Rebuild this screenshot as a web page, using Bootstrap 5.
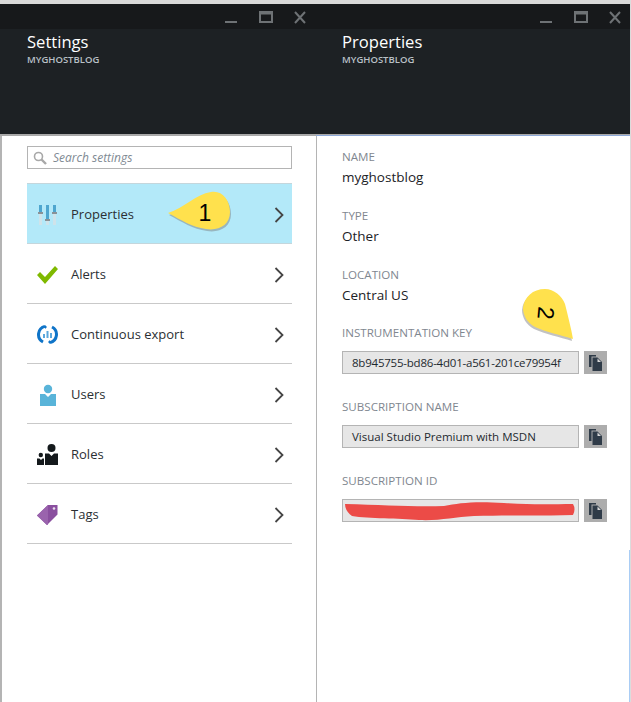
<!DOCTYPE html>
<html lang="en"><head><meta charset="utf-8">
<title>Settings</title>
<link href="https://cdn.jsdelivr.net/npm/bootstrap@5.3.0/dist/css/bootstrap.min.css" rel="stylesheet">
<style>
html,body{margin:0;height:702px;overflow:hidden;background:#fff}
body{font-family:"Open Sans","Noto Sans","Liberation Sans",sans-serif;padding-top:4px;position:relative}
.topline{position:absolute;left:0;right:0;top:0;height:4px;background:#d9d9d9}
.blades{height:698px;width:631px}
.blade{width:316px;height:100%;flex:none}
.blade+.blade{width:315px}
.blade-head{height:130px;background:#1d2124;border-bottom:2px solid #a9a9a9;box-sizing:content-box}
.win-bar{height:25px;background:#17191b;padding-right:6px}
.win-bar svg{display:block}
.blade-title{margin:0;padding:1px 0 0 27px;font-size:16.6px;line-height:24px;color:#fff;font-weight:400}
.blade+.blade .blade-title,.blade+.blade .blade-sub{padding-left:26px}
.blade-sub{padding-left:27px;font-size:9.5px;line-height:12px;font-weight:600;color:#b9c0c6}
.blade-body{height:566px;border-left:2px solid #b4b4b4;background:#fff}
.blade+.blade .blade-body{border-left-width:1px;border-left-color:#b4b4b4}
.left-in{padding:10px 24px 0 25px}
.search-box{height:23px;border:1px solid #b4b4b4;padding-left:5px;gap:6px;font-size:12px;font-style:italic;color:#7f8a93;background:#fff}
.menu-list{margin-top:14px;--bs-list-group-bg:transparent;border-radius:0}
.menu-row{height:60px;border:0;border-bottom:1px solid #c9c9c9;border-radius:0!important;padding:2px 8px 0 10px;font-size:13px;color:#2b2f33;background:transparent}
.menu-row.on{background:#b3e9f9;border-bottom-color:#c4d6dc;border-top:1px solid #c4d6dc;height:61px}
.ico{width:21px;flex:none;margin-right:13px}
.ico svg{display:block}
.props{padding:13px 0 0 25px}
.p-label{font-size:11.6px;line-height:16px;color:#7f8790;margin:0}
.p-value{font-size:13.5px;line-height:20px;color:#1c2226;margin:2px 0 21px}
.p-value.last{margin-bottom:20px}
.field-row{margin:10px 0 25px;gap:5px;height:23px}
.field-box{width:237px;height:23px;border:1px solid #b4b4b4;background:#e6e6e6;font-size:11.5px;line-height:21px;padding-left:9px;color:#1f2a30;white-space:nowrap;overflow:hidden;position:relative}
.key-text{letter-spacing:-.22px}
.copy-btn{width:23px;height:23px;background:#adadad;flex:none}
.scribble{position:absolute;left:1px;top:1px}
.callout{position:absolute;display:block;overflow:visible}
.callout text{font-family:"Liberation Sans",sans-serif;font-size:23px;fill:#000;text-anchor:middle}
.edge-r{position:absolute;left:630px;top:0;width:1px;height:702px;background:#dcdcdc}
.edge-b{position:absolute;left:629px;top:550px;width:1px;height:152px;background:#a9cdf5}
.edge-t{position:absolute;left:316px;top:135px;width:314px;height:1px;background:#8ea9d8}
</style></head><body>
<div class="topline"></div>
<div class="blades d-flex">
 <section class="blade">
  <div class="blade-head">
   <div class="win-bar d-flex justify-content-end align-items-center"><svg width="90" height="25" viewBox="0 0 90 25"><rect x="5" y="17" width="12" height="2" fill="#6e7275"/><rect x="40" y="8" width="12" height="10" fill="none" stroke="#6e7275" stroke-width="2"/><rect x="39" y="7" width="14" height="3.500" fill="#6e7275"/><path d="M75 8l10 11M85 8L75 19" stroke="#6e7275" stroke-width="2" fill="none"/></svg></div>
   <h1 class="blade-title">Settings</h1>
   <div class="blade-sub">MYGHOSTBLOG</div>
  </div>
  <div class="blade-body left-in">
   <div class="search-box d-flex align-items-center">
    <svg width="14" height="14" viewBox="0 0 14 14"><circle cx="5.5" cy="5.5" r="4" fill="none" stroke="#a8a8a8" stroke-width="1.6"/><path d="M8.5 8.500l4.500 4.500" stroke="#a8a8a8" stroke-width="2.400"/></svg>
    <span>Search settings</span>
   </div>
   <div class="list-group menu-list">
    <div class="list-group-item menu-row on d-flex align-items-center">
     <span class="ico"><svg width="21" height="22" viewBox="0 0 21 22"><g fill="#cfe3ea"><rect x="2" y="1" width="3" height="20"/><rect x="9" y="1" width="3" height="20"/><rect x="16" y="1" width="3" height="20"/></g><g fill="#4ea6cf"><rect x="2" y="1" width="3" height="7"/><rect x="9" y="1" width="3" height="14"/><rect x="16" y="1" width="3" height="7"/></g><g fill="#8a9297"><rect x="1" y="8" width="5" height="2"/><rect x="8" y="15" width="5" height="2"/><rect x="15" y="8" width="5" height="2"/></g></svg></span>
     <span class="flex-grow-1">Properties</span>
     <svg width="10" height="16" viewBox="0 0 10 16"><path d="M1.500 1l7 7-7 7" fill="none" stroke="#454545" stroke-width="1.800"/></svg>
    </div>
    <div class="list-group-item menu-row d-flex align-items-center">
     <span class="ico"><svg width="21" height="18" viewBox="0 0 21 18"><path d="M0 9l3-3 5 5L18 0l3 3L8 18z" fill="#7fb900"/></svg></span>
     <span class="flex-grow-1">Alerts</span>
     <svg width="10" height="16" viewBox="0 0 10 16"><path d="M1.500 1l7 7-7 7" fill="none" stroke="#454545" stroke-width="1.800"/></svg>
    </div>
    <div class="list-group-item menu-row d-flex align-items-center">
     <span class="ico"><svg width="21" height="21" viewBox="0 0 21 21"><path d="M8 2.400A8.400 8.400 0 0 0 6 18M13 18.600A8.400 8.400 0 0 0 15 3" fill="none" stroke="#0f74c8" stroke-width="3"/><path d="M8 1l2 2-2 2zM13 20l-2-2 2-2z" fill="#0f74c8"/><g fill="#5ba7dc"><rect x="6" y="10" width="2" height="4"/><rect x="9.500" y="7" width="2" height="7"/><rect x="13" y="9" width="2" height="5"/></g></svg></span>
     <span class="flex-grow-1">Continuous export</span>
     <svg width="10" height="16" viewBox="0 0 10 16"><path d="M1.500 1l7 7-7 7" fill="none" stroke="#454545" stroke-width="1.800"/></svg>
    </div>
    <div class="list-group-item menu-row d-flex align-items-center">
     <span class="ico"><svg width="21" height="22" viewBox="0 0 21 22"><circle cx="11" cy="5" r="4.200" fill="#59b4d9"/><path d="M3 10h5l3 3 3-3h5v12H3z" fill="#59b4d9"/></svg></span>
     <span class="flex-grow-1">Users</span>
     <svg width="10" height="16" viewBox="0 0 10 16"><path d="M1.500 1l7 7-7 7" fill="none" stroke="#454545" stroke-width="1.800"/></svg>
    </div>
    <div class="list-group-item menu-row d-flex align-items-center">
     <span class="ico"><svg width="21" height="21" viewBox="0 0 21 21"><circle cx="14.500" cy="4" r="4" fill="#14191c"/><path d="M8 9.500h4l2.500 2.500 2.500-2.500h4V21H8z" fill="#14191c"/><circle cx="3.800" cy="11" r="2.200" fill="#14191c"/><path d="M0 14.500h2.500L4 16l1.500-1.500H7V21H0z" fill="#14191c"/></svg></span>
     <span class="flex-grow-1">Roles</span>
     <svg width="10" height="16" viewBox="0 0 10 16"><path d="M1.500 1l7 7-7 7" fill="none" stroke="#454545" stroke-width="1.800"/></svg>
    </div>
    <div class="list-group-item menu-row d-flex align-items-center">
     <span class="ico"><svg width="21" height="21" viewBox="0 0 21 21"><path d="M0 11.500L11 1h9.500v9.500L10 21z" fill="#8a4f9f"/><path d="M0 11.500L11 1v19.500L10 21z" fill="#9a63ad"/><circle cx="17" cy="4.500" r="1.300" fill="#e8e0ec"/></svg></span>
     <span class="flex-grow-1">Tags</span>
     <svg width="10" height="16" viewBox="0 0 10 16"><path d="M1.500 1l7 7-7 7" fill="none" stroke="#454545" stroke-width="1.800"/></svg>
    </div>
   </div>
  </div>
 </section>
 <section class="blade">
  <div class="blade-head">
   <div class="win-bar d-flex justify-content-end align-items-center"><svg width="90" height="25" viewBox="0 0 90 25"><rect x="5" y="17" width="12" height="2" fill="#6e7275"/><rect x="40" y="8" width="12" height="10" fill="none" stroke="#6e7275" stroke-width="2"/><rect x="39" y="7" width="14" height="3.500" fill="#6e7275"/><path d="M75 8l10 11M85 8L75 19" stroke="#6e7275" stroke-width="2" fill="none"/></svg></div>
   <h1 class="blade-title">Properties</h1>
   <div class="blade-sub">MYGHOSTBLOG</div>
  </div>
  <div class="blade-body props">
   <p class="p-label">NAME</p><p class="p-value">myghostblog</p>
   <p class="p-label">TYPE</p><p class="p-value">Other</p>
   <p class="p-label">LOCATION</p><p class="p-value last">Central US</p>
   <p class="p-label">INSTRUMENTATION KEY</p>
   <div class="field-row d-flex"><div class="field-box key-text">8b945755-bd86-4d01-a561-201ce79954f</div><div class="copy-btn d-flex align-items-center justify-content-center"><svg width="13" height="16" viewBox="0 0 13 16"><path d="M0 0h7v1.500H2.500V12H0z" fill="#2f3b48"/><path d="M3.500 2.500h5l4.500 4.500v9H3.500z" fill="#2f3b48"/><path d="M8.500 3.500v3.500h3.500z" fill="#d6d6d6"/></svg></div></div>
   <p class="p-label">SUBSCRIPTION NAME</p>
   <div class="field-row d-flex"><div class="field-box">Visual Studio Premium with MSDN</div><div class="copy-btn d-flex align-items-center justify-content-center"><svg width="13" height="16" viewBox="0 0 13 16"><path d="M0 0h7v1.500H2.500V12H0z" fill="#2f3b48"/><path d="M3.500 2.500h5l4.500 4.500v9H3.500z" fill="#2f3b48"/><path d="M8.500 3.500v3.500h3.500z" fill="#d6d6d6"/></svg></div></div>
   <p class="p-label">SUBSCRIPTION ID</p>
   <div class="field-row d-flex"><div class="field-box"><svg class="scribble" width="234" height="21" viewBox="0 0 234 21"><path d="M1 3C40 4 70 6 100 5C115 2 130 0 160 2C190 4 210 3 229 3Q232 8 229 14C200 15 170 14 130 15C110 16 95 20 75 19C55 17 25 18 8 15Q1 10 1 3Z" fill="#ec4b47"/></svg></div><div class="copy-btn d-flex align-items-center justify-content-center"><svg width="13" height="16" viewBox="0 0 13 16"><path d="M0 0h7v1.500H2.500V12H0z" fill="#2f3b48"/><path d="M3.500 2.500h5l4.500 4.500v9H3.500z" fill="#2f3b48"/><path d="M8.500 3.500v3.500h3.500z" fill="#d6d6d6"/></svg></div></div>
  </div>
 </section>
</div>
<div class="edge-t"></div>
<div class="edge-r"></div>
<div class="edge-b"></div>
<svg class="callout" style="left:160px;top:186px" width="80" height="52" viewBox="0 0 80 52"><path d="M8 27C24 22 36 8 51 6C62 4 70 14 70 26C70 39 59 45 46 43C32 41 21 34 8 27Z" fill="#777" opacity=".45" transform="translate(1 2)"/><path d="M8 27C24 22 36 8 51 6C62 4 70 14 70 26C70 39 59 45 46 43C32 41 21 34 8 27Z" fill="#ffe14d"/><text x="45" y="35">1</text></svg>
<svg class="callout" style="left:518px;top:288px" width="64" height="60" viewBox="0 0 64 60"><path d="M27 1C36 1 44 8 47 16C50 28 53 40 55 51C43 47 28 44 17 39C9 35 5 27 5 20C6 9 15 1 27 1Z" fill="#777" opacity=".45" transform="translate(-1 2)"/><path d="M27 1C36 1 44 8 47 16C50 28 53 40 55 51C43 47 28 44 17 39C9 35 5 27 5 20C6 9 15 1 27 1Z" fill="#ffe14d"/><text transform="translate(28 25) rotate(95)" x="0" y="8">2</text></svg>
</body></html>
